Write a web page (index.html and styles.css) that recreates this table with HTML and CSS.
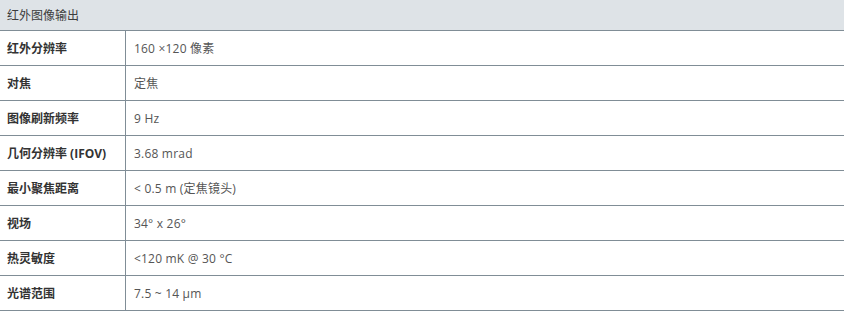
FILE: index.html
```html
<!DOCTYPE html>
<html>
  <head>
    <meta charset="utf-8">
    <title>红外图像输出</title>
    <link rel="stylesheet" href="styles.css">
  </head>
  <body>
    <table class="spec">
      <thead>
        <tr>
          <th colspan="2">红外图像输出</th>
        </tr>
      </thead>
      <tbody>
        <tr><td class="label">红外分辨率</td><td>160 ×120 像素</td></tr>
        <tr><td class="label">对焦</td><td>定焦</td></tr>
        <tr><td class="label">图像刷新频率</td><td>9 Hz</td></tr>
        <tr><td class="label">几何分辨率 (IFOV)</td><td>3.68 mrad</td></tr>
        <tr><td class="label">最小聚焦距离</td><td>&lt; 0.5 m (定焦镜头)</td></tr>
        <tr><td class="label">视场</td><td>34° x 26°</td></tr>
        <tr><td class="label">热灵敏度</td><td>&lt;120 mK @ 30 °C</td></tr>
        <tr><td class="label">光谱范围</td><td>7.5 ~ 14 µm</td></tr>
      </tbody>
    </table>
  </body>
</html>
```

FILE: styles.css
```css
body {
  margin: 0;
  font-family: "Open Sans", "Noto Sans CJK SC", sans-serif;
  font-size: 12px;
  background: #fff;
}

.spec {
  border-collapse: collapse;
  width: 844px;
}

.spec th {
  text-align: left;
  font-weight: normal;
  color: #3c3c3c;
  background-color: #dee3e7;
  height: 30px;
  padding: 0 7px;
  border-bottom: 1px solid #808d96;
}

.spec td {
  height: 34px;
  padding: 0 8px;
  color: #555;
  letter-spacing: 0.2px;
  border-bottom: 1px solid #808d96;
}

.spec td.label {
  width: 110px;
  padding-left: 7px;
  color: #333;
  font-weight: bold;
  letter-spacing: 0;
  border-right: 1px solid #808d96;
}
```
